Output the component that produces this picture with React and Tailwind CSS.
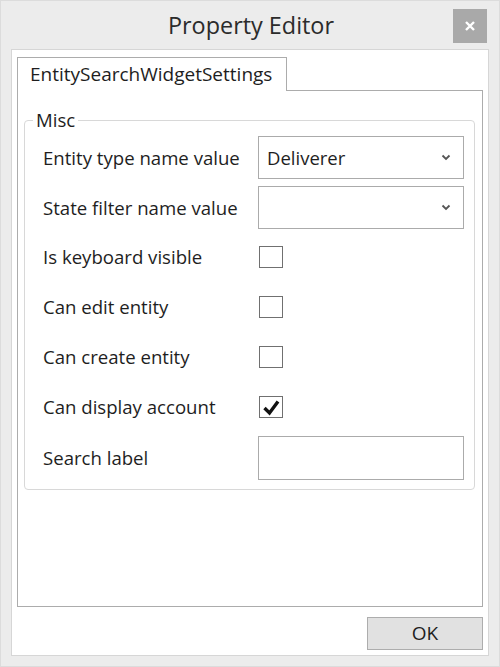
import React from "react";

const font = { fontFamily: '"Open Sans", "Noto Sans", "Liberation Sans", sans-serif' };

function Chevron() {
  return (
    <svg width="10" height="7" viewBox="0 0 10 7" className="mr-[12px]">
      <polyline points="1.5,1.5 5,5 8.5,1.5" fill="none" stroke="#555" strokeWidth="1.8" />
    </svg>
  );
}

function Combo({ value }) {
  return (
    <div className="h-[43px] border border-[#ababab] bg-white flex items-center justify-between pl-[8px]">
      <span className="text-[18.5px] text-[#1e1e1e]">{value}</span>
      <Chevron />
    </div>
  );
}

function Check({ checked }) {
  return (
    <div className="ml-[1px] w-[24px] h-[22px] border border-[#707070] bg-white flex items-center justify-center">
      {checked && (
        <svg width="19" height="17" viewBox="0 0 19 17">
          <path d="M2.5 9 L7.5 14 L16 2.5" fill="none" stroke="#111" strokeWidth="3.4" strokeLinejoin="miter" />
        </svg>
      )}
    </div>
  );
}

function Row({ label, children, h = "h-[42px]" }) {
  return (
    <div className={`grid grid-cols-[215px_206px] items-center ${h}`}>
      <span className="text-[18.6px] text-[#1e1e1e] leading-none whitespace-nowrap pt-[1px]">{label}</span>
      <div>{children}</div>
    </div>
  );
}

export default function App() {
  return (
    <div style={font} className="w-[500px] h-[667px] bg-[#ececec] border border-[#dcdcdc] flex flex-col px-[10px] pb-[10px]">
      <div className="h-[49px] grid grid-cols-[1fr_auto_1fr] items-center">
        <div />
        <div className="text-[23.4px] text-[#2b2b2b] pl-[2px] pt-[2px] whitespace-nowrap">Property Editor</div>
        <div className="justify-self-end self-start mt-[8px] mr-[2px] w-[34px] h-[34px] bg-[#a9a9a9] flex items-center justify-center">
          <svg width="12" height="12" viewBox="0 0 12 12">
            <path d="M2 2 L10 10 M10 2 L2 10" stroke="#fff" strokeWidth="2.4" />
          </svg>
        </div>
      </div>
      <div className="flex-1 bg-white border border-[#d6d6d6] flex flex-col px-[5px] pt-[6px] pb-[5px]">
        <div className="flex">
          <div className="h-[34px] border border-b-0 border-[#acacac] bg-white pl-[12px] pr-[14px] flex items-center relative top-[1px] z-10">
            <span className="text-[19px] text-[#1e1e1e] whitespace-nowrap">EntitySearchWidgetSettings</span>
          </div>
        </div>
        <div className="h-[517px] border border-[#acacac] pt-[17px] pl-[6px] pr-[7px]">
          <fieldset className="border border-[#d8d8d8] rounded-[4px] pl-[18px] pr-[8px] pb-[9px]">
            <legend className="-ml-[10px] px-[3px] text-[18.6px] leading-[24px] text-[#1e1e1e]">Misc</legend>
            <div className="flex flex-col gap-[8px] pt-[4px]">
              <Row label="Entity type name value"><Combo value="Deliverer" /></Row>
              <Row label="State filter name value"><Combo value="" /></Row>
              <Row label="Is keyboard visible"><Check /></Row>
              <Row label="Can edit entity"><Check /></Row>
              <Row label="Can create entity"><Check /></Row>
              <Row label="Can display account"><Check checked /></Row>
              <Row label="Search label" h="h-[44px]">
                <div className="h-[44px] border border-[#ababab] bg-white" />
              </Row>
            </div>
          </fieldset>
        </div>
        <div className="flex justify-end mt-[10px]">
          <div className="w-[116px] h-[33px] bg-[#e1e1e1] border border-[#adadad] flex items-center justify-center text-[19px] text-[#1e1e1e]">
            OK
          </div>
        </div>
      </div>
    </div>
  );
}
